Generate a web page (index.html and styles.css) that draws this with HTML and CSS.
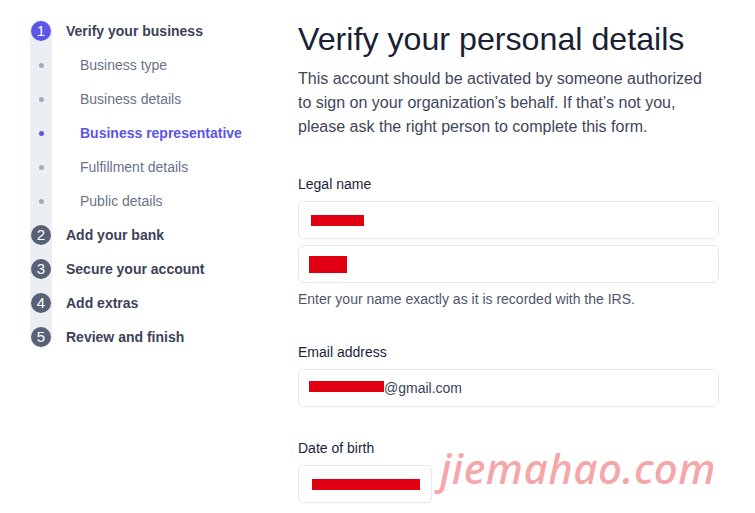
FILE: index.html
```html
<!DOCTYPE html>
<html>
<head>
<meta charset="utf-8">
<link rel="stylesheet" href="styles.css">
</head>
<body>
<div class="page">
  <aside class="sidebar">
    <ul class="steps">
      <li class="step">
        <span class="marker"><span class="num active">1</span></span>
        <span class="step-label">Verify your business</span>
      </li>
      <li class="sub">
        <span class="marker"><span class="dot"></span></span>
        <span class="sub-label">Business type</span>
      </li>
      <li class="sub">
        <span class="marker"><span class="dot"></span></span>
        <span class="sub-label">Business details</span>
      </li>
      <li class="sub current">
        <span class="marker"><span class="dot"></span></span>
        <span class="sub-label">Business representative</span>
      </li>
      <li class="sub">
        <span class="marker"><span class="dot"></span></span>
        <span class="sub-label">Fulfillment details</span>
      </li>
      <li class="sub">
        <span class="marker"><span class="dot"></span></span>
        <span class="sub-label">Public details</span>
      </li>
      <li class="step">
        <span class="marker"><span class="num">2</span></span>
        <span class="step-label">Add your bank</span>
      </li>
      <li class="step">
        <span class="marker"><span class="num">3</span></span>
        <span class="step-label">Secure your account</span>
      </li>
      <li class="step">
        <span class="marker"><span class="num">4</span></span>
        <span class="step-label">Add extras</span>
      </li>
      <li class="step">
        <span class="marker"><span class="num">5</span></span>
        <span class="step-label">Review and finish</span>
      </li>
    </ul>
  </aside>
  <main class="main">
    <h1 class="title">Verify your personal details</h1>
    <p class="intro">This account should be activated by someone authorized to sign on your organization’s behalf. If that’s not you, please ask the right person to complete this form.</p>

    <section class="field field-first">
      <div class="label">Legal name</div>
      <div class="input"><span class="redact r1"></span></div>
      <div class="input input-gap"><span class="redact r2"></span></div>
      <div class="help">Enter your name exactly as it is recorded with the IRS.</div>
    </section>

    <section class="field field-email">
      <div class="label">Email address</div>
      <div class="input"><span class="redact r3"></span><span class="value">@gmail.com</span></div>
    </section>

    <section class="field field-dob">
      <div class="label">Date of birth</div>
      <div class="input input-small"><span class="redact r4"></span></div>
    </section>
  </main>
  <div class="watermark">jiemahao.com</div>
</div>
</body>
</html>
```
FILE: styles.css
```css
* { box-sizing: border-box; }
html, body { margin: 0; padding: 0; background: #fff; }
body {
  font-family: "Liberation Sans", Arial, sans-serif;
  color: #3c4257;
  width: 755px;
  height: 513px;
  overflow: hidden;
}
.page {
  position: relative;
  display: flex;
  height: 513px;
}
.sidebar {
  width: 298px;
  flex: none;
  padding: 14px 0 0 30px;
}
.steps {
  list-style: none;
  margin: 0;
  padding: 0;
  position: relative;
}
.steps::before {
  content: "";
  position: absolute;
  left: 0;
  top: 6px;
  bottom: 6px;
  width: 22px;
  border-radius: 11px;
  background: #ebeef2;
}
.steps li {
  position: relative;
  display: flex;
  align-items: center;
  height: 34px;
}
.marker {
  width: 22px;
  flex: none;
  display: flex;
  justify-content: center;
  align-items: center;
}
.num {
  width: 20px;
  height: 20px;
  border-radius: 50%;
  background: #596176;
  color: #fff;
  font-size: 15px;
  line-height: 20px;
  text-align: center;
}
.num.active { background: #5b55e8; }
.dot {
  width: 5px;
  height: 5px;
  border-radius: 50%;
  background: #a3acb9;
}
.sub.current .dot { background: #5b55e8; }
.step-label {
  margin-left: 14px;
  font-size: 14px;
  font-weight: bold;
  color: #3c4257;
}
.sub-label {
  margin-left: 28px;
  font-size: 14px;
  color: #697386;
}
.sub.current .sub-label {
  color: #5b55e8;
  font-weight: bold;
}
.main {
  width: 421px;
  flex: none;
  padding-top: 19px;
}
.title {
  margin: 0;
  font-size: 32.2px;
  line-height: 40px;
  font-weight: normal;
  color: #1a1f36;
}
.intro {
  margin: 8px 0 0;
  font-size: 16px;
  line-height: 24px;
  color: #414759;
  width: 421px;
}
.field { display: flex; flex-direction: column; }
.field-first { margin-top: 35px; }
.field-email { margin-top: 33px; }
.field-dob { margin-top: 31px; }
.label {
  font-size: 14px;
  line-height: 20px;
  color: #1a1f36;
  margin-bottom: 7px;
}
.input {
  position: relative;
  height: 38px;
  border: 1px solid #e3e8ee;
  border-radius: 6px;
  display: flex;
  align-items: center;
  padding-left: 11px;
  box-shadow: 0 1px 1px rgba(0,0,0,0.02);
}
.input-gap { margin-top: 6px; }
.input-small { width: 134px; }
.help {
  margin-top: 6px;
  font-size: 14px;
  line-height: 20px;
  color: #4f566b;
}
.value {
  font-size: 14px;
  color: #3c4257;
}
.redact {
  display: inline-block;
  background: #e00012;
}
.r1 { width: 53px; height: 11px; margin-left: 1px; }
.r2 { width: 38px; height: 17px; margin-left: -1px; }
.r3 { width: 75px; height: 11px; margin-top: -4px; margin-left: -1px; }
.r4 { width: 108px; height: 11px; margin-left: 2px; }
.watermark {
  position: absolute;
  left: 440px;
  top: 438px;
  font-family: "Noto Sans", "DejaVu Sans", sans-serif;
  font-style: italic;
  font-weight: 500;
  font-size: 42px;
  letter-spacing: 0.5px;
  color: #f4a6a9;
  line-height: 60px;
}
```
